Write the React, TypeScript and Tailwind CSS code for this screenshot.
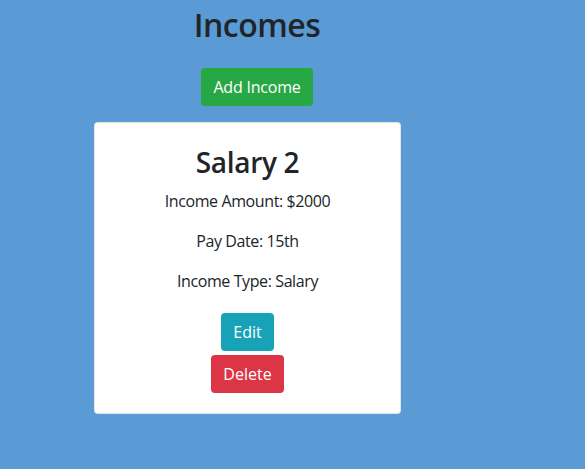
import React from 'react';

const font = { fontFamily: '"Open Sans", "Noto Sans", sans-serif' };

const App: React.FC = () => {
  return (
    <div className="min-h-screen w-full bg-[#5b9bd5] text-[#212529]" style={font}>
      <div className="flex w-[514px] flex-col items-center pt-[6px]">
        <h1 className="mb-[24px] text-[32px] font-semibold leading-[38px] tracking-[-0.5px]">Incomes</h1>
        <button className="h-[38px] rounded-[4px] bg-[#28a745] px-3 text-[16px] text-white tracking-[-0.2px]">
          Add Income
        </button>
      </div>
      <div className="ml-[94px] mt-[16px] w-[307px] rounded-[4px] border border-black/10 bg-white p-5 text-center">
        <h2 className="mb-2 text-[28px] font-semibold leading-[38px] tracking-[-0.3px]">Salary 2</h2>
        <p className="mb-4 text-[16px] leading-6 tracking-[-0.4px]">Income Amount: $2000</p>
        <p className="mb-4 text-[16px] leading-6 tracking-[-0.4px]">Pay Date: 15th</p>
        <p className="mb-4 text-[16px] leading-6 tracking-[-0.4px]">Income Type: Salary</p>
        <div className="flex flex-col items-center gap-1 pt-1">
          <button className="h-[38px] rounded-[4px] bg-[#17a2b8] px-3 text-[16px] text-white">Edit</button>
          <button className="h-[38px] rounded-[4px] bg-[#dc3545] px-3 text-[16px] text-white">Delete</button>
        </div>
      </div>
    </div>
  );
};

export default App;
